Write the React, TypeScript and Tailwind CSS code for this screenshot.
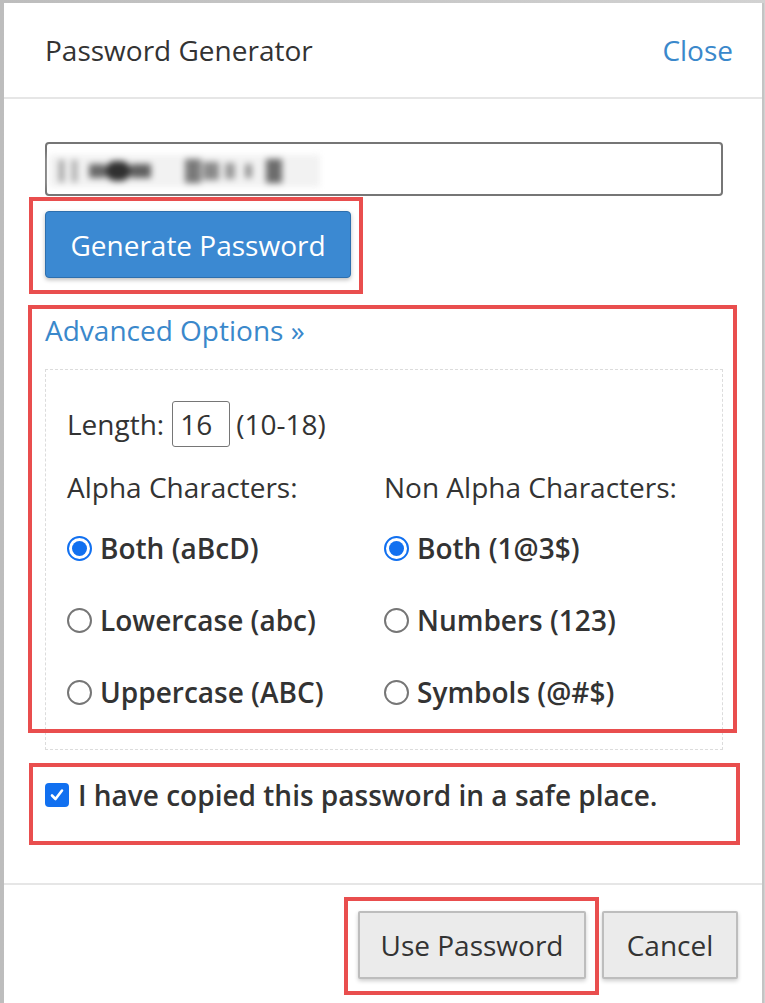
import React from "react";

function Radio({ checked }: { checked: boolean }) {
  return checked ? (
    <span className="inline-flex h-[25px] w-[25px] shrink-0 items-center justify-center rounded-full border-[2px] border-[#1170f0] bg-white">
      <span className="h-[15px] w-[15px] rounded-full bg-[#1170f0]" />
    </span>
  ) : (
    <span className="inline-block h-[25px] w-[25px] shrink-0 rounded-full border-[2px] border-[#767676] bg-white" />
  );
}

function RadioRow({ checked, label, className }: { checked: boolean; label: string; className?: string }) {
  return (
    <div className={"flex h-[32px] items-center gap-[8px] " + (className || "")}>
      <Radio checked={checked} />
      <span className="text-[28px] font-semibold leading-[32px] text-[#333]">{label}</span>
    </div>
  );
}

export default function App() {
  return (
    <div className="min-h-screen bg-[linear-gradient(90deg,#bdbdbd,#d2d2d2)] pl-[4px] pt-[3px] font-['Open_Sans',sans-serif] text-[#333]">
      <div className="relative h-[1000px] w-[760px] border-r-2 border-[#c4c4c4] bg-white">
        {/* header */}
        <div className="flex h-[96px] items-center justify-between border-b-2 border-[#e6e6e6] pl-[41px] pr-[29px]">
          <span className="text-[28px] leading-[32px] text-[#333]">Password Generator</span>
          <span className="text-[28px] leading-[32px] text-[#3a88cb]">Close</span>
        </div>

        {/* body */}
        <div className="px-[41px] pt-[43px]">
          <div className="relative h-[54px] w-[678px] rounded-[4px] border-2 border-[#767676]">
            <div className="absolute left-[2px] top-[11px] flex h-[32px] w-[271px] items-center bg-[#f2f2f2] pl-[10px] blur-[3px]">
              <span className="h-[22px] w-[5px] bg-[#9a9a9a]" />
              <span className="ml-[8px] h-[22px] w-[5px] bg-[#a4a4a4]" />
              <span className="ml-[12px] h-[14px] w-[16px] bg-[#6a6a6a]" />
              <span className="h-[20px] w-[26px] rounded-full bg-[#303030]" />
              <span className="h-[14px] w-[20px] bg-[#606060]" />
              <span className="ml-[34px] h-[24px] w-[16px] bg-[#7a7a7a]" />
              <span className="ml-[2px] h-[18px] w-[16px] bg-[#8a8a8a]" />
              <span className="ml-[6px] h-[16px] w-[10px] bg-[#9a9a9a]" />
              <span className="ml-[10px] h-[14px] w-[7px] bg-[#949494]" />
              <span className="ml-[14px] h-[24px] w-[16px] bg-[#6c6c6c]" />
            </div>
          </div>

          <button className="mt-[15px] flex h-[67px] w-[306px] items-center justify-center rounded-[4px] border border-[#2d6fae] bg-[#3b89d2] text-[28px] leading-[32px] text-white shadow-[0_2px_4px_rgba(0,0,0,0.25)]">
            Generate Password
          </button>

          <div className="mt-[36px] text-[28px] leading-[32px] text-[#3a88cb]">Advanced Options »</div>

          <div className="mt-[23px] w-[678px] border border-dashed border-[#dcdcdc] px-[21px] pb-[41px] pt-[31px]">
            <div className="flex h-[46px] items-center">
              <span className="text-[28px] leading-[32px]">Length:</span>
              <span className="ml-[8px] flex h-[46px] w-[58px] items-center rounded-[3px] border border-[#767676] pl-[7px] text-[28px] leading-[32px]">16</span>
              <span className="ml-[6px] text-[28px] leading-[32px]">(10-18)</span>
            </div>
            <div className="mt-[24px] grid grid-cols-2">
              <div>
                <div className="text-[28px] leading-[32px]">Alpha Characters:</div>
                <RadioRow checked label="Both (aBcD)" className="mt-[29px]" />
                <RadioRow checked={false} label="Lowercase (abc)" className="mt-[40px]" />
                <RadioRow checked={false} label="Uppercase (ABC)" className="mt-[40px]" />
              </div>
              <div>
                <div className="text-[28px] leading-[32px]">Non Alpha Characters:</div>
                <RadioRow checked label="Both (1@3$)" className="mt-[29px]" />
                <RadioRow checked={false} label="Numbers (123)" className="mt-[40px]" />
                <RadioRow checked={false} label="Symbols (@#$)" className="mt-[40px]" />
              </div>
            </div>
          </div>

          <div className="mt-[29px] flex h-[32px] items-center gap-[9px]">
            <span className="flex h-[24px] w-[24px] items-center justify-center rounded-[4px] bg-[#1170f0]">
              <svg width="16" height="16" viewBox="0 0 16 16" fill="none">
                <path d="M3 8.5 L6.5 12 L13 3.5" stroke="white" strokeWidth="2.6" strokeLinecap="round" strokeLinejoin="round" />
              </svg>
            </span>
            <span className="text-[28px] font-semibold leading-[32px]">I have copied this password in a safe place.</span>
          </div>
        </div>

        {/* footer */}
        <div className="mt-[72px] flex justify-end gap-[16px] border-t-2 border-[#e6e6e6] pr-[24px] pt-[26px]">
          <button className="h-[68px] w-[228px] rounded-[2px] border-2 border-[#bdbdbd] bg-[#ebebeb] text-[28px] leading-[32px] text-[#333] shadow-[0_2px_4px_rgba(0,0,0,0.2)]">
            Use Password
          </button>
          <button className="h-[68px] w-[136px] rounded-[2px] border-2 border-[#bdbdbd] bg-[#ebebeb] text-[28px] leading-[32px] text-[#333] shadow-[0_2px_4px_rgba(0,0,0,0.2)]">
            Cancel
          </button>
        </div>

        {/* annotation boxes */}
        <div className="pointer-events-none absolute left-[25px] top-[194px] h-[97px] w-[334px] border-4 border-[#e94e4e]" />
        <div className="pointer-events-none absolute left-[24px] top-[302px] h-[428px] w-[709px] border-4 border-[#e94e4e]" />
        <div className="pointer-events-none absolute left-[25px] top-[760px] h-[82px] w-[711px] border-4 border-[#e94e4e]" />
        <div className="pointer-events-none absolute left-[340px] top-[894px] h-[98px] w-[255px] border-4 border-[#e94e4e]" />
      </div>
    </div>
  );
}
